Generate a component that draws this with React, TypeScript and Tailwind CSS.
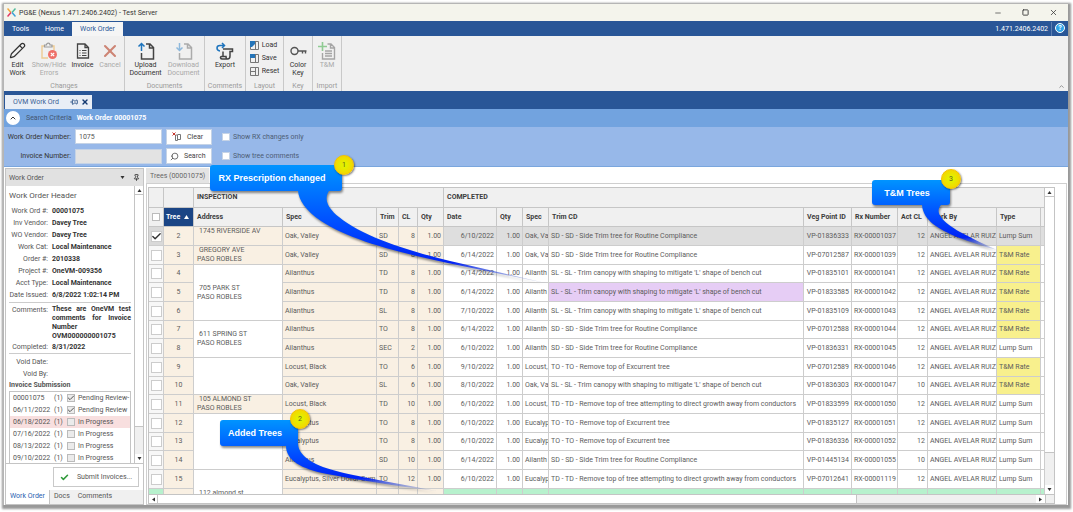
import React from 'react';
import clsx from 'clsx';
import { Check, ChevronUp, Minus, Pencil, Pin, Search, Square, X } from 'lucide-react';

type Row = {
  tree: number;
  spec: string;
  trim: string;
  cl: number;
  date: string;
  done: string;
  code: string;
  veg: string;
  rx: string;
  act: number;
  tm?: boolean;
  changed?: boolean;
  address?: string[];
  span?: number;
};

const SD = 'SD - SD - Side Trim tree for Routine Compliance';
const SL = "SL - SL - Trim canopy with shaping to mitigate 'L' shape of bench cut";
const TO = 'TO - TO - Remove top of Excurrent tree';
const TD = 'TD - TD - Remove top of tree attempting to direct growth away from conductors';

const rows: Row[] = [
  { tree: 2, spec: 'Oak, Valley', trim: 'SD', cl: 8, date: '6/10/2022', done: 'Oak, Va', code: SD, veg: 'VP-01836333', rx: 'RX-00001037', act: 12, address: ['1745 RIVERSIDE AV'] },
  { tree: 3, spec: 'Oak, Valley', trim: 'SD', cl: 8, date: '6/14/2022', done: 'Oak, Va', code: SD, veg: 'VP-07012587', rx: 'RX-00001039', act: 12, tm: true, address: ['GREGORY AVE', 'PASO ROBLES'] },
  { tree: 4, spec: 'Ailanthus', trim: 'TD', cl: 8, date: '6/14/2022', done: 'Ailanth', code: SL, veg: 'VP-01835101', rx: 'RX-00001041', act: 12, tm: true, address: ['705 PARK ST', 'PASO ROBLES'], span: 3 },
  { tree: 5, spec: 'Ailanthus', trim: 'TD', cl: 8, date: '6/14/2022', done: 'Ailanth', code: SL, veg: 'VP-01833585', rx: 'RX-00001042', act: 12, tm: true, changed: true },
  { tree: 6, spec: 'Ailanthus', trim: 'SL', cl: 8, date: '7/10/2022', done: 'Ailanth', code: SL, veg: 'VP-01835109', rx: 'RX-00001043', act: 12, tm: true },
  { tree: 7, spec: 'Ailanthus', trim: 'TO', cl: 8, date: '6/14/2022', done: 'Ailanth', code: SD, veg: 'VP-07012588', rx: 'RX-00001044', act: 12, tm: true, address: ['611 SPRING ST', 'PASO ROBLES'], span: 2 },
  { tree: 8, spec: 'Ailanthus', trim: 'SEC', cl: 2, date: '6/10/2022', done: 'Ailanth', code: SD, veg: 'VP-01836331', rx: 'RX-00001045', act: 12 },
  { tree: 9, spec: 'Locust, Black', trim: 'TO', cl: 6, date: '9/10/2022', done: 'Locust,', code: TO, veg: 'VP-07012589', rx: 'RX-00001046', act: 12, tm: true, address: [], span: 2 },
  { tree: 10, spec: 'Oak, Valley', trim: 'SL', cl: 6, date: '8/10/2022', done: 'Oak, Va', code: SL, veg: 'VP-01836303', rx: 'RX-00001047', act: 10, tm: true },
  { tree: 11, spec: 'Locust, Black', trim: 'TD', cl: 10, date: '6/10/2022', done: 'Locust,', code: TD, veg: 'VP-01833599', rx: 'RX-00001050', act: 12, address: ['105 ALMOND ST', 'PASO ROBLES'] },
  { tree: 12, spec: 'Eucalyptus', trim: 'TO', cl: 8, date: '6/10/2022', done: 'Eucalyp', code: TO, veg: 'VP-01835127', rx: 'RX-00001051', act: 12, address: [], span: 3 },
  { tree: 13, spec: 'Eucalyptus', trim: 'TO', cl: 8, date: '6/10/2022', done: 'Eucalyp', code: TO, veg: 'VP-01836336', rx: 'RX-00001052', act: 12 },
  { tree: 14, spec: 'Ailanthus', trim: 'SD', cl: 10, date: '6/14/2022', done: 'Ailanth', code: SD, veg: 'VP-01445134', rx: 'RX-00001055', act: 10 },
  { tree: 15, spec: 'Eucalyptus, Silver Dollar Gum', trim: 'TO', cl: 12, date: '6/10/2022', done: 'Eucalyp', code: TD, veg: 'VP-07012641', rx: 'RX-00001119', act: 12, address: ['112 almond st'], span: 2 },
];

const details = [
  ['Work Ord #:', '00001075'],
  ['Inv Vendor:', 'Davey Tree'],
  ['WO Vendor:', 'Davey Tree'],
  ['Work Cat:', 'Local Maintenance'],
  ['Order #:', '2010338'],
  ['Project #:', 'OneVM-009356'],
  ['Acct Type:', 'Local Maintenance'],
  ['Date Issued:', '6/8/2022 1:02:14 PM'],
];

const submissions = [
  { date: '00001075', status: 'Pending Review-', checked: true },
  { date: '06/11/2022', status: 'Pending Review', checked: true },
  { date: '06/18/2022', status: 'In Progress', current: true },
  { date: '07/16/2022', status: 'In Progress' },
  { date: '08/13/2022', status: 'In Progress' },
  { date: '09/10/2022', status: 'In Progress' },
];

const CheckBox = ({ label, checked = false, className }: { label?: string; checked?: boolean; className: string }) => (
  <span className="relative inline-flex shrink-0 align-middle">
    <input type="checkbox" aria-label={label} defaultChecked={checked} className={clsx('peer block appearance-none border', className)} />
    <Check className="pointer-events-none absolute inset-0 hidden h-full w-full peer-checked:block" strokeWidth={3} />
  </span>
);

const Arrow = ({ d }: { d: string }) => (
  <svg width="5" height="5" viewBox="0 0 5 5" aria-hidden="true"><path d={d} fill="#333" /></svg>
);
const UP = 'M2.5 1 4.5 4h-4z';
const DOWN = 'M2.5 4 4.5 1h-4z';

// Ribbon icons
const ErrorsIcon = () => (
  <svg width="18" height="18" viewBox="0 0 18 18" fill="none">
    <path d="M5 4H2v12h6M12 4h2v4" stroke="#eecb92" strokeWidth="1.4" />
    <path d="M4.500 5V3H6.500C6.500 .5 10 .5 10 3h2v2z" stroke="#9b9b9b" strokeWidth="1.200" />
    <circle cx="12.500" cy="12.500" r="4.500" fill="#ee6f68" />
    <path d="m10.800 10.800 3.400 3.400m0-3.400-3.400 3.400" stroke="#fff" strokeWidth="1.200" />
  </svg>
);
const InvoiceIcon = () => (
  <svg width="14" height="16" viewBox="0 0 14 16" fill="none" stroke="#444" strokeWidth="1.300">
    <path d="M1.500 1h7.500l3.500 3.500V15h-11zM9 1v3.500h3.500" />
    <path d="M3.500 7.500h1m1.500 0h4.500m-7 2.500h1m1.500 0h4.500m-7 2.500h1m1.500 0h4.500" strokeWidth="1" />
  </svg>
);
const DocArrowIcon = ({ down = false }: { down?: boolean }) => (
  <svg width="18" height="18" viewBox="0 0 18 18" fill="none" strokeWidth="1.500">
    <path d="M9 2h4l3.500 3.500V17h-12v-6M12.500 2v4h4" stroke={down ? '#ababab' : '#444'} />
    <path d={down ? 'M4.500 1v7M1.500 5.500l3 3 3-3' : 'M4.500 9V1.500M1.500 4.500l3-3 3 3'} stroke={down ? '#8db8dc' : '#1e74bd'} />
  </svg>
);
const ExportIcon = () => (
  <svg width="18" height="18" viewBox="0 0 18 18" fill="none" strokeWidth="1.500">
    <path d="M7 9.500v5M7 7h9.500v2.500H14V14c0 2.500-1 3-2.500 3H6.500c-2.500 0-2.500-2.500-1-2.500h4.500c0 2.500 1.500 2.500 1.500 2.500" stroke="#444" />
    <path d="M4 9C0 8.500 0 3.500 4 3.500h4.500M6 1l2.500 2.500L6 6" stroke="#1e74bd" />
  </svg>
);
const KeyIcon = () => (
  <svg width="17" height="10" viewBox="0 0 17 10" fill="none" stroke="#555" strokeWidth="1.400">
    <circle cx="4.500" cy="5" r="3.500" />
    <path d="M8 5h8.500M12.500 5v2.500m3-2.500v2.500" />
  </svg>
);
const TmIcon = () => (
  <svg width="18" height="18" viewBox="0 0 18 18" fill="none" strokeWidth="1.400">
    <path d="M9.500 2H13l3.500 3.500V17h-12v-6M12.500 2v4h4M7 9h7m-7 2.500h7M7 14h7" stroke="#a5a5a5" />
    <path d="M4.500 0v9M0 4.500h9" stroke="#8fcb93" strokeWidth="1.600" />
  </svg>
);
const LayoutIcon = ({ kind }: { kind: string }) => (
  <svg width="9" height="9" viewBox="0 0 9 9" fill="none" stroke="#777">
    <path d="M.5.5h8v8h-8zM5.500.5v8" />
    {kind === 'Reset' ? <path d="M.5 4.500h5" /> : <path d={kind === 'Load' ? 'M0 0h5v3L2 6H0z' : 'M0 0h5v4H0z'} fill="#2474b8" stroke="none" />}
  </svg>
);

const RibbonButton = ({ icon, lines, disabled = false }: { icon: React.ReactNode; lines: string[]; disabled?: boolean }) => (
  <button type="button" className={clsx('flex flex-col items-center leading-[8px]', disabled ? 'text-[#a9a9a9]' : 'text-[#333]')}>
    <span className="flex h-[21px] items-center justify-center">{icon}</span>
    {lines.map((line) => (
      <span key={line}>{line}</span>
    ))}
  </button>
);

const RibbonGroup = ({ name, className, children }: { name: string; className: string; children: React.ReactNode }) => (
  <section className={clsx('flex flex-col justify-between border-r border-[#c9c9c9] pt-1', className)}>
    <div className="flex justify-center">{children}</div>
    <span className="text-center leading-[9px] text-[#9b9b9b]">{name}</span>
  </section>
);

type CalloutProps = {
  n: number;
  text: string;
  place: string;
  box: string;
  badge: string;
  viewBox: string;
  size: [number, number];
  d: string;
};

const Callout = ({ n, text, place, box, badge, viewBox, size, d }: CalloutProps) => (
  <div className={clsx('pointer-events-none absolute', place)}>
    <svg width={size[0]} height={size[1]} viewBox={viewBox} className="drop-shadow-[1px_2px_1px_rgba(0,0,0,0.45)]" aria-hidden="true">
      <defs>
        <linearGradient id={`blue${n}`} x1="0" y1="0" x2="0" y2="1">
          <stop offset="0" stopColor="#0094ff" />
          <stop offset="0.500" stopColor="#004cff" />
          <stop offset="0.820" stopColor="#0022f5" />
          <stop offset="1" stopColor="#8090c0" stopOpacity="0.200" />
        </linearGradient>
      </defs>
      <path d={d} fill={`url(#blue${n})`} />
    </svg>
    <span className={clsx('absolute top-0 left-0 flex h-[26px] items-center justify-center pr-2 font-[Liberation_Sans] text-[9px] font-bold whitespace-nowrap text-white', box)}>{text}</span>
    <span className={clsx('absolute flex size-[20px] items-center justify-center rounded-full border border-[#f3c300] bg-radial from-[#e2f000] from-20% to-[#fbc800] text-[7px] text-[#5d5d20] shadow-[1px_1px_2px_rgba(0,0,0,0.5)]', badge)}>{n}</span>
  </div>
);

const th = 'overflow-hidden border-r border-b border-[#c6c6c6] px-[3px] text-left font-bold whitespace-nowrap text-[#3c3c3c]';
const td = 'overflow-hidden border-r border-b border-[#cdcdcd] px-[2px] whitespace-nowrap';

const TreeTable = () => (
  <table className="w-full table-fixed border-separate border-spacing-0 bg-white leading-[9px] text-[#5c5c5c]">
    <colgroup>
      <col className="w-[15px]" />
      <col className="w-[30px]" />
      <col className="w-[89px]" />
      <col className="w-[94px]" />
      <col className="w-[22px]" />
      <col className="w-[19px]" />
      <col className="w-[26px]" />
      <col className="w-[53px]" />
      <col className="w-[26px]" />
      <col className="w-[26px]" />
      <col />
      <col className="w-[48px]" />
      <col className="w-[46px]" />
      <col className="w-[30px]" />
      <col className="w-[69px]" />
      <col className="w-[44px]" />
      <col className="w-[4px]" />
    </colgroup>
    <thead className="bg-[#f0f0f0]">
      <tr className="h-[20px]">
        <th className={th} />
        <th className={th} />
        <th className={th} colSpan={5}>INSPECTION</th>
        <th className={th} colSpan={10}>COMPLETED</th>
      </tr>
      <tr className="h-[19px]">
        <th className={clsx(th, 'text-center')}><CheckBox label="Select all trees" className="size-[8px] border-[#bbb] bg-white" /></th>
        <th className="border-r border-b border-[#c6c6c6] bg-[#1b4585] pl-[2px] text-left font-bold text-white">
          <span className="flex items-center gap-1">Tree <svg width="5" height="4" viewBox="0 0 5 4"><path d="M2.500 0 5 4H0z" fill="#fff" /></svg></span>
        </th>
        {['Address', 'Spec', 'Trim', 'CL', 'Qty', 'Date', 'Qty', 'Spec', 'Trim CD', 'Veg Point ID', 'Rx Number', 'Act CL', 'Work By', 'Type', ''].map((name, i) => (
          <th key={i} className={th}>{name}</th>
        ))}
      </tr>
    </thead>
    <tbody>
      {rows.map((row, i) => {
        const first = i === 0;
        const done = clsx(td, first && 'bg-[#dedede]');
        const cream = clsx(td, 'bg-[#f9f0e3]');
        return (
          <tr key={row.tree} className={i % 3 === 2 ? 'h-[18px]' : 'h-[19px]'}>
            <td className={clsx(td, 'text-center text-[#333]', first ? 'bg-[#d9d9d9]' : 'bg-[#f7f7f7]')}>
              <CheckBox label={`Select tree ${row.tree}`} checked={first} className="size-[11px] border-[#ccc] bg-white" />
            </td>
            <td className={clsx(cream, 'text-center')}>{row.tree}</td>
            {row.address && (
              <td
                rowSpan={row.span}
                className={clsx(td, row.span ? 'bg-white' : 'bg-[#f9f0e3]', row.address.length === 1 && (first ? 'align-top' : 'align-bottom'))}
              >
                {row.address.map((line, n) => (
                  <div key={line} className={n === 0 ? 'pl-[3px]' : 'pl-px'}>{line}</div>
                ))}
              </td>
            )}
            <td className={cream}>{row.spec}</td>
            <td className={cream}>{row.trim}</td>
            <td className={clsx(cream, 'text-right')}>{row.cl}</td>
            <td className={clsx(cream, 'text-right')}>1.00</td>
            <td className={clsx(done, 'text-right')}>{row.date}</td>
            <td className={clsx(done, 'text-right')}>1.00</td>
            <td className={done}>{row.done}</td>
            <td className={clsx(done, row.changed && 'bg-[#e6cdf5]')}>{row.code}</td>
            <td className={clsx(done, 'text-right')}>{row.veg}</td>
            <td className={done}>{row.rx}</td>
            <td className={clsx(done, 'text-right')}>{row.act}</td>
            <td className={done}>ANGEL AVELAR RUIZ</td>
            <td className={clsx(done, row.tm && 'bg-[#f8f08d]')}>{row.tm ? 'T&M Rate' : 'Lump Sum'}</td>
            <td className={clsx(td, first && 'bg-[#dedede]')} />
          </tr>
        );
      })}
      {/* first of the added trees, cut off by the pane */}
      <tr className="h-[10px]">
        <td className={clsx(td, 'bg-[#b7f1cd]')} />
        {[1, 2, 3, 4, 5].map((n) => (
          <td key={n} className={clsx(td, 'bg-[#f9f0e3]')} />
        ))}
        {[1, 2, 3, 4, 5, 6, 7, 8, 9, 10].map((n) => (
          <td key={n} className={clsx(td, 'bg-[#b7f1cd]')} />
        ))}
      </tr>
    </tbody>
  </table>
);

const WorkOrderPanel = () => (
  <aside className="flex w-[139px] shrink-0 flex-col border border-[#c4c4c4] bg-white">
    <header className="flex h-[17px] items-center bg-[#e1e1e1] px-[3px] text-[#555]">
      <span className="grow">Work Order</span>
      <Arrow d={DOWN} />
      <Pin className="ml-2 size-[7px] text-[#333]" strokeWidth={3} />
    </header>
    <div className="flex h-[278px] border-b border-[#c4c4c4]">
      <div className="min-w-0 grow overflow-hidden px-[3px] pt-1 leading-[12px] text-[#555]">
        <h2 className="mb-[3px] text-[8px]">Work Order Header</h2>
        <dl className="grid grid-cols-[39px_1fr] gap-x-[4px]">
          {details.map(([name, value]) => (
            <React.Fragment key={name}>
              <dt className="text-right whitespace-nowrap">{name}</dt>
              <dd className="font-bold whitespace-nowrap text-[#333]">{value}</dd>
            </React.Fragment>
          ))}
        </dl>
        <dl className="mt-px grid grid-cols-[39px_1fr] gap-x-[4px] border-y border-[#ccc] pt-[2px]">
          <dt className="text-right leading-[10px]">Comments:</dt>
          <dd className="leading-[9px] font-bold text-[#333]">
            <p className="text-justify [text-align-last:justify]">These are OneVM test comments for Invoice</p>
            <p>Number OVM000000001075</p>
          </dd>
          <dt className="text-right">Completed:</dt>
          <dd className="font-bold text-[#333]">8/31/2022</dd>
        </dl>
        <dl className="mt-[2px] w-[39px] text-right">
          <dt>Void Date:</dt>
          <dt>Void By:</dt>
        </dl>
        <h3 className="leading-[11px] font-bold">Invoice Submission</h3>
        <ul className="border border-[#c4c4c4] bg-white">
          {submissions.map((s) => (
            <li key={s.date} className={clsx('flex items-center overflow-hidden pl-[3px] whitespace-nowrap', s.current && 'bg-[#f8dfdf]')}>
              <span className="w-[41px]">{s.date}</span>
              <span className="w-[13px]">(1)</span>
              <CheckBox label={`${s.date} submitted`} checked={s.checked} className="size-[8px] border-[#bbb] bg-[#ebebeb]" />
              <span className="pl-[3px]">{s.status}</span>
            </li>
          ))}
        </ul>
      </div>
      <div className="flex w-[9px] shrink-0 flex-col border-l border-[#c4c4c4] bg-[#f0f0f0]">
        <span className="flex h-[9px] items-center justify-center border-b border-[#c4c4c4] bg-white"><Arrow d={UP} /></span>
        <span className="h-[232px] border-b border-[#c4c4c4] bg-white" />
        <span className="mt-auto flex h-[9px] items-center justify-center bg-white"><Arrow d={DOWN} /></span>
      </div>
    </div>
    <div className="flex justify-end py-[3px] pr-[4px]">
      <button type="button" className="flex h-[20px] w-[86px] items-center justify-center gap-2 border border-[#c9c9c9] text-[#555]">
        <Check className="size-[9px] text-[#2f9a3a]" strokeWidth={4} />
        Submit Invoices...
      </button>
    </div>
    <nav className="flex h-[14px] bg-[#f0f0f0] leading-[13px]">
      <a href="#work-order" className="bg-white px-[4px] text-[#2b62b0]">Work Order</a>
      <a href="#docs" className="border-l border-[#c4c4c4] px-[4px] text-[#555]">Docs</a>
      <a href="#comments" className="px-[4px] text-[#555]">Comments</a>
    </nav>
  </aside>
);

const App: React.FC = () => {
  return (
    <div className="relative bg-white pt-[3px] pr-[5px] pb-[8px] pl-[3px] font-[Roboto,'Open_Sans',sans-serif] text-[7px] leading-[10px]">
      <div className="border-t border-l border-[#b5b5b5] bg-white shadow-[1px_2px_2px_2px_#999]">
        <header className="flex h-[17px] items-center bg-[#f4f4ec] pr-[10px] pl-[3px] text-[#333]">
          <svg width="9" height="9" viewBox="0 0 9 9" fill="none" strokeWidth="1.500" aria-hidden="true">
            <path d="m.5.500 3.500 4" stroke="#f4a63a" />
            <path d="m8.500.500-3.500 4" stroke="#4dbb9b" />
            <path d="m.5 8.500 3.500-4" stroke="#e23a63" />
            <path d="m8.500 8.500-3.500-4" stroke="#3b9fd8" />
          </svg>
          <h1 className="grow pl-[3px]">PG&amp;E (Nexus 1.471.2406.2402) - Test Server</h1>
          <div className="flex gap-[20px]">
            <button type="button" aria-label="Minimize"><Minus className="size-[8px]" /></button>
            <button type="button" aria-label="Maximize"><Square className="size-[7px]" strokeWidth={3} /></button>
            <button type="button" aria-label="Close"><X className="size-[9px]" /></button>
          </div>
        </header>

        <nav className="flex h-[15px] items-end bg-[#295697] leading-[14px] text-white">
          <a href="#tools" className="w-[33px] text-center">Tools</a>
          <a href="#home" className="w-[35px] text-center">Home</a>
          <a href="#work-order" className="w-[51px] bg-[#f5f5f5] text-center text-[#295697]">Work Order</a>
          <span className="ml-auto border-r border-[#5c7fb2] pr-[3px]">1.471.2406.2402</span>
          <button type="button" aria-label="Help" className="mx-[3px] mb-[3px] size-[10px] rounded-full border border-white bg-[#2fa5e8] text-[7px] leading-[8px] font-bold">?</button>
        </nav>

        <div className="flex h-[55px] bg-[#f0f0f0]">
          <RibbonGroup name="Changes" className="w-[121px]">
            <div className="grid grid-cols-[25px_38px_29px_26px]">
              <RibbonButton icon={<Pencil size={17} strokeWidth={1.7} />} lines={['Edit', 'Work']} />
              <RibbonButton icon={<ErrorsIcon />} lines={['Show/Hide', 'Errors']} disabled />
              <RibbonButton icon={<InvoiceIcon />} lines={['Invoice']} />
              <RibbonButton icon={<X size={20} strokeWidth={2.5} color="#cd8575" />} lines={['Cancel']} disabled />
            </div>
          </RibbonGroup>
          <RibbonGroup name="Documents" className="w-[80px]">
            <div className="grid grid-cols-[35px_35px] gap-[3px]">
              <RibbonButton icon={<DocArrowIcon />} lines={['Upload', 'Document']} />
              <RibbonButton icon={<DocArrowIcon down />} lines={['Download', 'Document']} disabled />
            </div>
          </RibbonGroup>
          <RibbonGroup name="Comments" className="w-[41px]">
            <RibbonButton icon={<ExportIcon />} lines={['Export']} />
          </RibbonGroup>
          <RibbonGroup name="Layout" className="w-[38px]">
            <div className="flex flex-col gap-[3px]">
              {['Load', 'Save', 'Reset'].map((name) => (
                <button key={name} type="button" className="flex items-center gap-[3px] text-[#333]">
                  <LayoutIcon kind={name} />
                  {name}
                </button>
              ))}
            </div>
          </RibbonGroup>
          <RibbonGroup name="Key" className="w-[29px]">
            <RibbonButton icon={<KeyIcon />} lines={['Color', 'Key']} />
          </RibbonGroup>
          <RibbonGroup name="Import" className="w-[29px]">
            <RibbonButton icon={<TmIcon />} lines={['T&M']} disabled />
          </RibbonGroup>
          <button type="button" aria-label="Collapse ribbon" className="mt-auto ml-auto pr-[3px] pb-px text-[#888]"><ChevronUp className="size-[7px]" strokeWidth={3} /></button>
        </div>

        <div className="flex h-[18px] items-end bg-[#295697] pl-px">
          <div className="flex h-[14px] w-[87px] items-center bg-[#e9eef6] pl-[8px] text-[#3a5f95]">
            <span className="grow">OVM Work Ord</span>
            <Pin className="size-[8px] rotate-90 text-[#234a80]" strokeWidth={2.5} />
            <button type="button" aria-label="Close tab" className="px-[3px] text-[#143a72]"><X className="size-[8px]" strokeWidth={4} /></button>
          </div>
        </div>

        <div className="flex h-[18px] items-center bg-[#72a3df] pl-[2px]">
          <button type="button" aria-label="Collapse search" className="flex size-[14px] items-center justify-center rounded-full bg-white text-[#333]"><ChevronUp className="size-[8px]" strokeWidth={3} /></button>
          <span className="pl-[6px] text-[#44566f]">Search Criteria</span>
          <strong className="pl-[5px] text-white">Work Order 00001075</strong>
        </div>
        <form className="grid h-[40px] grid-cols-[67px_87px_46px_1fr] items-center gap-x-1 border-b border-[#7aa6dd] bg-[#97b8e9] text-[#333]">
          <label htmlFor="order" className="text-right whitespace-nowrap">Work Order Number:</label>
          <input id="order" defaultValue="1075" className="h-[15px] border border-[#c5d3e6] bg-white px-[3px] text-[#555]" />
          <button type="button" className="flex h-[16px] items-center gap-[6px] border border-[#c5d3e6] bg-white pl-[5px] text-[#444]">
            <svg width="9" height="9" viewBox="0 0 9 9" fill="none" stroke="#777">
              <path d="M3.500 3v5.500h2V3zM5.500 2.500h3v5h-3" />
              <path d="m.5.500 3 3m0-3-3 3" stroke="#c8362c" />
            </svg>
            Clear
          </button>
          <label className="flex items-center gap-[3px] pl-[6px] text-[#4d5d75]">
            <CheckBox className="size-[8px] border-[#c5d3e6] bg-white" />
            Show RX changes only
          </label>
          <label htmlFor="invoice" className="text-right whitespace-nowrap">Invoice Number:</label>
          <input id="invoice" className="h-[15px] border border-[#c5d3e6] bg-[#e3e3e3] px-[3px]" />
          <button type="button" className="flex h-[16px] items-center gap-[5px] border border-[#c5d3e6] bg-white pl-[3px] text-[#444]">
            <Search className="size-[9px] -scale-x-100" />
            Search
          </button>
          <label className="flex items-center gap-[3px] pl-[6px] text-[#4d5d75]">
            <CheckBox className="size-[8px] border-[#c5d3e6] bg-white" />
            Show tree comments
          </label>
        </form>

        <main className="flex gap-[2px] px-px pt-px">
          <WorkOrderPanel />
          <section className="flex min-w-0 grow flex-col">
            <a href="#trees" className="h-[15px] self-start bg-[#e4e4e4] px-[4px] leading-[17px] text-[#666]">Trees (00001075)</a>
            <div className="grow border border-[#cfcfcf] bg-white pt-[3px] pr-[11px] pl-px">
              <div className="grid grid-cols-[1fr_9px] border border-[#c4c4c4]">
                <div className="h-[306px] overflow-hidden">
                  <TreeTable />
                </div>
                <div className="flex flex-col bg-[#f0f0f0]">
                  <span className="flex h-[9px] items-center justify-center border-b border-[#c4c4c4] bg-white"><Arrow d={UP} /></span>
                  <span className="h-[256px] border-b border-[#c4c4c4] bg-white" />
                  <span className="mt-auto flex h-[9px] items-center justify-center bg-white"><Arrow d={DOWN} /></span>
                </div>
                <div className="flex h-[9px] border-t border-[#c4c4c4] bg-[#f0f0f0]">
                  <span className="flex w-[9px] items-center justify-center border-r border-[#c4c4c4] bg-white"><Arrow d="M1 2.500 4 .5v4z" /></span>
                  <span className="w-[78%] border-r border-[#c4c4c4] bg-white" />
                  <span className="ml-auto flex w-[9px] items-center justify-center bg-white"><Arrow d="M4 2.500 1 .5v4z" /></span>
                </div>
                <div className="border-t border-l border-[#c4c4c4] bg-[#f0f0f0]" />
              </div>
            </div>
          </section>
        </main>
      </div>

      <Callout
        n={1}
        text="RX Prescription changed"
        place="top-[165px] left-[210px]"
        box="w-[132px]"
        badge="-top-[10px] left-[124px]"
        viewBox="210 165 342 122"
        size={[342, 122]}
        d="M213 165H339Q342 165 342 168V188Q342 191 339 191H329C323 200 329 209 339 217C362 236 405 250 450 261L550 284L450 263.500C395 252 348 239 321 221C305 210 299 200 298 191H213Q210 191 210 188V168Q210 165 213 165Z"
      />
      <Callout
        n={2}
        text="Added Trees"
        place="top-[420px] left-[220px]"
        box="w-[78px]"
        badge="-top-[11px] left-[70px]"
        viewBox="220 420 220 74"
        size={[220, 74]}
        d="M223 420H295Q298 420 298 423V444C299 457 315 466 340 472C360 477 400 484 437 491C400 487 360 480 327 474C301 469 286 460 286 446H223Q220 446 220 443V423Q220 420 223 420Z"
      />
      <Callout
        n={3}
        text="T&M Trees"
        place="top-[180px] right-[75px]"
        box="w-[78px]"
        badge="-top-[11px] left-[69px]"
        viewBox="872 180 126 72"
        size={[126, 72]}
        d="M875 180H947Q950 180 950 183V202Q950 205 947 205H941C934 213 943 222 960 232C975 240 986 245 997 250C985 247 970 242 957 237C938 229 923 220 922 205H875Q872 205 872 202V183Q872 180 875 180Z"
      />
    </div>
  );
};

export default App;
